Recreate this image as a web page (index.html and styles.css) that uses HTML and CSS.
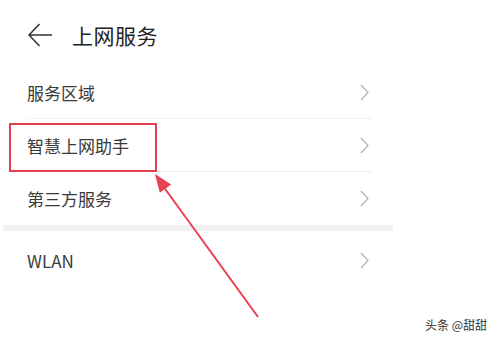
FILE: index.html
```html
<!DOCTYPE html>
<html>
<head>
    <meta charset="UTF-8">
    <title>上网服务</title>
    <link rel="stylesheet" href="styles.css">
</head>
<body>
<div id="wrap">

    <div class="head">
        <svg class="back" width="24" height="24" viewBox="0 0 24 24">
            <path d="M11.5 1 L1 12 L11.5 23 M1 12 H24" fill="none" stroke="#333" stroke-width="1.6"/>
        </svg>
        <h1>上网服务</h1>
    </div>

    <div class="list">
        <div class="row">
            <div class="inner line">
                <span>服务区域</span>
                <svg class="more" width="9" height="17" viewBox="0 0 9 17"><path d="M1 1 L8 8.5 L1 16" fill="none" stroke="#b5b5b5" stroke-width="1.3"/></svg>
            </div>
        </div>
        <div class="row">
            <div class="inner line">
                <span>智慧上网助手</span>
                <svg class="more" width="9" height="17" viewBox="0 0 9 17"><path d="M1 1 L8 8.5 L1 16" fill="none" stroke="#b5b5b5" stroke-width="1.3"/></svg>
            </div>
        </div>
        <div class="row">
            <div class="inner">
                <span>第三方服务</span>
                <svg class="more" width="9" height="17" viewBox="0 0 9 17"><path d="M1 1 L8 8.5 L1 16" fill="none" stroke="#b5b5b5" stroke-width="1.3"/></svg>
            </div>
        </div>
        <div class="gap"></div>
        <div class="row tall">
            <div class="inner">
                <span>WLAN</span>
                <svg class="more" width="9" height="17" viewBox="0 0 9 17"><path d="M1 1 L8 8.5 L1 16" fill="none" stroke="#b5b5b5" stroke-width="1.3"/></svg>
            </div>
        </div>
    </div>

    <svg class="mark" width="498" height="347" viewBox="0 0 498 347">
        <rect x="10" y="124" width="146" height="47" fill="none" stroke="#e0404f" stroke-width="2"/>
        <line x1="258" y1="317" x2="163" y2="186" stroke="#e8414f" stroke-width="2"/>
        <polygon points="155,174 171.2,184.5 159.8,192.7" fill="#e8414f"/>
    </svg>

    <p class="logo">头条 @甜甜</p>
</div>
</body>
</html>
```

FILE: styles.css
```css
body{margin:0;font-family:"Noto Sans CJK SC","Noto Sans",sans-serif;background:#fff;}
h1,p{margin:0;}

#wrap{
    position: relative;
    width: 498px;
    height: 347px;
    overflow: hidden;
}
#wrap .head{
    display: flex;
    align-items: center;
    height: 62px;
    padding: 4px 0 0 28px;
}
#wrap .head .back{
    display: block;
}
#wrap .head h1{
    margin-left: 20px;
    font-size: 21px;
    font-weight: normal;
    color: #222;
    letter-spacing: 0.5px;
}
#wrap .list{
    width: 390px;
    margin-left: 3px;
}
#wrap .row{
    height: 53px;
}
#wrap .row.tall{
    height: 58px;
}
#wrap .row .inner{
    display: flex;
    align-items: center;
    justify-content: space-between;
    box-sizing: border-box;
    height: 100%;
    margin: 0 21px 0 24px;
    font-size: 17px;
    color: #3a3a3a;
}
#wrap .row .inner.line{
    border-bottom: 1px solid #f0f0f0;
}
#wrap .row .more{
    display: block;
    margin-right: 3px;
}
#wrap .gap{
    height: 6px;
    background-color: #f2f2f2;
}
#wrap .mark{
    position: absolute;
    left: 0;
    top: 0;
}
#wrap .logo{
    position: absolute;
    right: 11px;
    bottom: 14px;
    font-size: 12px;
    color: #333;
}
```
